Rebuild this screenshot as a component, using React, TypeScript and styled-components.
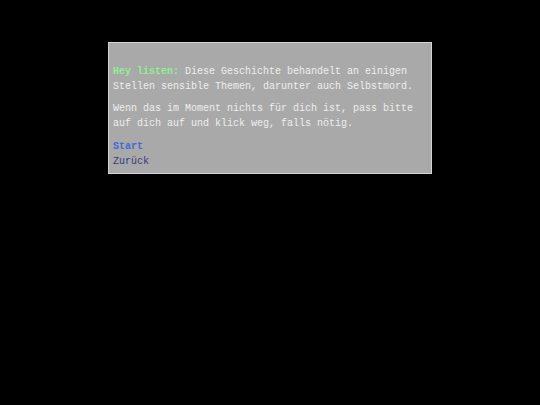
import React from "react";
import styled, { createGlobalStyle } from "styled-components";

const GlobalStyle = createGlobalStyle`
    html, body {
        margin: 0;
        padding: 0;
        background: #000000;
    }
`;

const Page = styled.div`
    display: flex;
    justify-content: center;
    width: 540px;
    height: 405px;
    padding-top: 42px;
    box-sizing: border-box;
    background: #000000;
`;

const Dialog = styled.div`
    width: 324px;
    box-sizing: border-box;
    align-self: flex-start;
    padding: 21px 4px 4px;
    background: #a9a9a9;
    border: 1px solid #d4d4d4;
    font-family: "Courier New", "Liberation Mono", monospace;
    font-size: 10px;
    line-height: 15px;
    color: #eeeeee;
`;

const Paragraph = styled.p`
    margin: 0 0 7px;
`;

const Shout = styled.span`
    color: #92ee92;
    font-weight: bold;
`;

const Choices = styled.div`
    display: flex;
    flex-direction: column;
    margin-top: 8px;
`;

const Choice = styled.a<{ $primary?: boolean }>`
    color: ${(p) => (p.$primary ? "#4169d8" : "#3a3a7c")};
    font-weight: ${(p) => (p.$primary ? "bold" : "normal")};
    text-decoration: none;
    cursor: pointer;
`;

const App = () => {
    return (
        <Page>
            <GlobalStyle />
            <Dialog>
                <Paragraph>
                    <Shout>Hey listen:</Shout> Diese Geschichte behandelt an einigen
                    Stellen sensible Themen, darunter auch Selbstmord.
                </Paragraph>
                <Paragraph>
                    Wenn das im Moment nichts für dich ist, pass bitte auf dich auf
                    und klick weg, falls nötig.
                </Paragraph>
                <Choices>
                    <Choice $primary>Start</Choice>
                    <Choice>Zurück</Choice>
                </Choices>
            </Dialog>
        </Page>
    );
};

export default App;
